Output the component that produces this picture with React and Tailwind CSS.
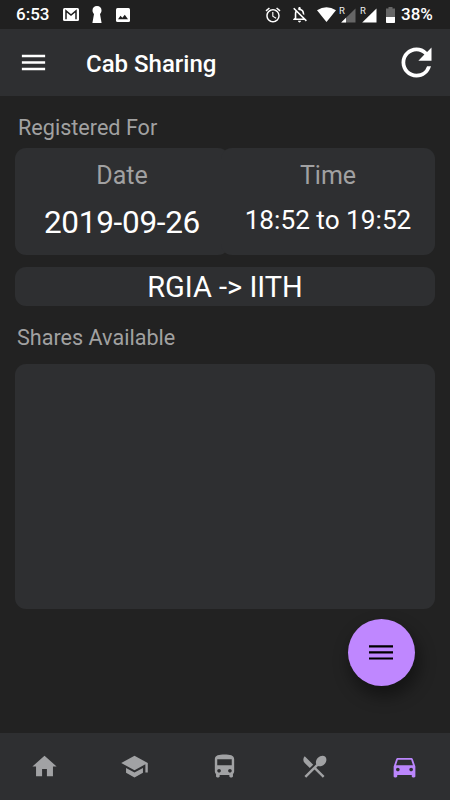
// src/App.jsx
// Cab sharing screen: registered slot, available shares and bottom navigation.

import {
  MdAlarm,
  MdDirectionsBus,
  MdDirectionsCar,
  MdHome,
  MdLocalDining,
  MdMenu,
  MdOutlineNotificationsOff,
  MdRefresh,
  MdSchool,
} from 'react-icons/md'

const tabs = [
  { name: 'Home', Icon: MdHome },
  { name: 'Courses', Icon: MdSchool },
  { name: 'Bus', Icon: MdDirectionsBus },
  { name: 'Mess', Icon: MdLocalDining },
  { name: 'Cab', Icon: MdDirectionsCar, active: true },
]

// ─── Status bar icons ─────────────────────────────────────────────────────────
function MailIcon() {
  return (
    <svg width="16" height="13" viewBox="0 0 16 13" className="ml-[14px]">
      <rect width="16" height="13" rx="1.5" fill="#fff" />
      <path d="M3 11.2V2.9L8 7l5-4.1v8.3" fill="none" stroke="#202020" strokeWidth="1.5" />
    </svg>
  )
}

function KeyholeIcon() {
  return (
    <svg width="10" height="17" viewBox="0 0 10 17" className="ml-[13px]">
      <path d="M5 0c2.8 0 4.5 1.7 4.5 4.2C9.5 5.8 9 7 8 8L9.6 17H.4L2 8C1 7 .5 5.8.5 4.2.5 1.7 2.2 0 5 0z" fill="#fff" />
    </svg>
  )
}

function PictureIcon() {
  return (
    <svg width="14" height="14" viewBox="0 0 14 14" className="ml-[14px]">
      <rect width="14" height="14" rx="1.5" fill="#fff" />
      <path d="M2 11.3l2.5-3.6 1.9 2 2.4-2.9 3.2 4.5z" fill="#202020" />
    </svg>
  )
}

function WifiIcon() {
  return (
    <svg width="19" height="15" viewBox="0 0 19 15" className="ml-[8px]">
      <path d="M0 3.3Q9.5-3 19 3.3L9.5 15z" fill="#fff" />
    </svg>
  )
}

function SignalIcon({ weak, className }) {
  return (
    <svg width="17" height="18" viewBox="0 0 17 18" className={className}>
      <text x="0" y="8" fontSize="9.5" fill="#eee">R</text>
      <path d="M16.5 2.5v14H2.2z" fill={weak ? '#666' : '#fff'} />
      {weak && <path d="M7 11.8v4.7H2.2z" fill="#fff" />}
    </svg>
  )
}

function BatteryIcon() {
  return (
    <svg width="9" height="16" viewBox="0 0 9 16" className="ml-[9px]">
      <path d="M2.5 0h4v1.5H9V10H0V1.5h2.5z" fill="#666" />
      <path d="M0 10h9v5.2a.8.8 0 0 1-.8.8H.8a.8.8 0 0 1-.8-.8z" fill="#fff" />
    </svg>
  )
}

function StatusBar() {
  return (
    <div className="flex h-[29px] items-center bg-[#202020] pl-4 pr-[16px] text-white">
      <span className="w-[33px] whitespace-nowrap text-[17px] font-medium leading-none">6:53</span>
      <MailIcon />
      <KeyholeIcon />
      <PictureIcon />
      <div className="ml-auto flex items-center">
        <MdAlarm size={18} />
        <MdOutlineNotificationsOff size={19} className="ml-[8px]" />
        <WifiIcon />
        <SignalIcon weak className="ml-[3px]" />
        <SignalIcon className="ml-[4px]" />
        <BatteryIcon />
        <span className="ml-[6px] w-[33px] whitespace-nowrap text-[17px] font-medium leading-none">38%</span>
      </div>
    </div>
  )
}

// ─── App bar ──────────────────────────────────────────────────────────────────
function AppBar() {
  return (
    <header className="flex h-[67px] items-center bg-[#2e2f31] pl-[18px] pr-[11px] text-white">
      <MdMenu size={31} />
      <h1 className="ml-[37px] pt-[2px] text-[24px] font-medium leading-none">Cab Sharing</h1>
      <MdRefresh size={45} className="ml-auto" />
    </header>
  )
}

function SlotCard({ label, value, className = '', valueClassName }) {
  return (
    <div className={`h-[107px] w-[214px] shrink-0 rounded-[11px] bg-[#2e2f31] pt-[12px] text-center ${className}`}>
      <p className="h-[32px] text-[25px] leading-[32px] text-[#a1a1a2]">{label}</p>
      <p className={`whitespace-nowrap text-white ${valueClassName}`}>{value}</p>
    </div>
  )
}

// ─── Bottom navigation ────────────────────────────────────────────────────────
function BottomNav() {
  return (
    <nav className="grid h-[67px] grid-cols-5 place-items-center bg-[#2e2f31]">
      {tabs.map(({ name, Icon, active }) => (
        <button key={name} aria-label={name} className={active ? 'pr-px text-[#bb86fc]' : 'pr-px text-[#a1a2a4]'}>
          <Icon size={29} />
        </button>
      ))}
    </nav>
  )
}

export default function App() {
  return (
    <div className="relative flex h-[800px] w-[450px] flex-col overflow-hidden bg-[#222222] font-['Roboto',sans-serif]">
      <StatusBar />
      <AppBar />

      <main className="flex flex-1 flex-col px-[15px]">
        <h2 className="mt-[18px] pl-[3px] text-[21.6px] leading-[28px] text-[#a1a1a1]">Registered For</h2>
        <div className="mt-[6px] flex">
          <SlotCard label="Date" value="2019-09-26" valueClassName="text-[31.5px] leading-[61px] tracking-[-0.3px]" />
          <SlotCard label="Time" value="18:52 to 19:52" className="-ml-[8px]" valueClassName="text-[26.2px] leading-[56px]" />
        </div>
        <div className="mt-[12px] h-[39px] rounded-[11px] bg-[#2e2f31] text-center text-[29px] leading-[41px] text-white">
          RGIA -&gt; IITH
        </div>
        <h2 className="mt-[18px] pl-[2px] text-[21.6px] leading-[28px] text-[#a1a1a1]">Shares Available</h2>
        <div className="mt-[12px] h-[245px] rounded-[11px] bg-[#2e2f31]" />
      </main>

      <BottomNav />

      <button
        aria-label="Open menu"
        className="absolute right-[35px] top-[619px] flex size-[67px] items-center justify-center rounded-full bg-[#bf87ff] pr-px text-black shadow-[3px_9px_16px_2px_rgba(0,0,0,0.4)]"
      >
        <svg width="24" height="15" viewBox="0 0 24 15">
          <path d="M0 1.3h24M0 7.4h24M0 13.5h24" stroke="currentColor" strokeWidth="2.2" />
        </svg>
      </button>
    </div>
  )
}
